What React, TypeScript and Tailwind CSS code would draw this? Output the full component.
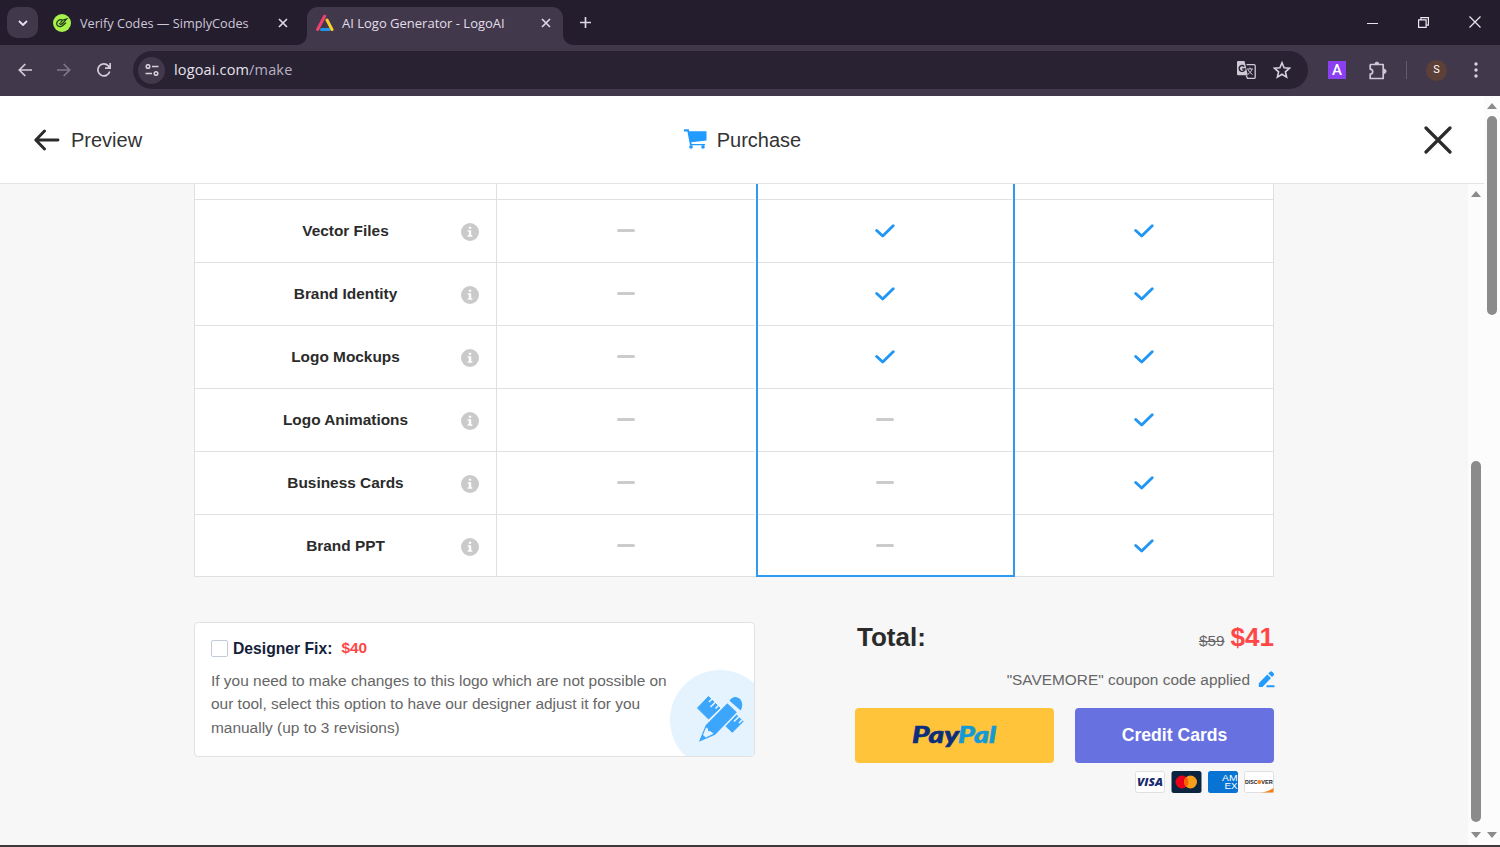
import React from "react";

const ui = "font-['Open_Sans',sans-serif]";

const features = [
  { name: "Vector Files", plans: [false, true, true] },
  { name: "Brand Identity", plans: [false, true, true] },
  { name: "Logo Mockups", plans: [false, true, true] },
  { name: "Logo Animations", plans: [false, false, true] },
  { name: "Business Cards", plans: [false, false, true] },
  { name: "Brand PPT", plans: [false, false, true] },
];

const TabClose: React.FC = () => (
  <svg width="10" height="10" viewBox="0 0 10 10" stroke="#ddd6e4" strokeWidth="1.7" fill="none">
    <path d="M1 1l8 8M9 1L1 9" />
  </svg>
);

const TabStrip: React.FC = () => (
  <div className="flex h-[45px] shrink-0 items-end bg-[#241d2e]">
    <div className="flex h-[45px] w-[307px] items-center pl-[7px]">
      <div className="flex h-[31px] w-[31px] items-center justify-center rounded-[10px] bg-[#41394b]">
        <svg width="10" height="6" viewBox="0 0 10 6" fill="none" stroke="#e8e2ee" strokeWidth="1.8">
          <path d="M1 1l4 4 4-4" />
        </svg>
      </div>
      <svg className="ml-[15px]" width="18" height="18" viewBox="0 0 18 18" fill="none">
        <circle cx="9" cy="9" r="9" fill="#a8f04b" />
        <path d="M9.500 6C6.500 5 3.500 7 3.700 10c.2 2.700 3.800 3.300 6 1.500l3.300-2.700M6.300 9.300c.7 1.500 2.700 1.200 3.900-.4L13.500 5l-4 1.200-2 2.600" stroke="#1d3a16" strokeWidth="1.3" />
      </svg>
      <span className={`${ui} ml-[9px] mt-[2px] w-[198px] whitespace-nowrap text-[12.7px] text-[#cfc8d6]`}>
        Verify Codes — SimplyCodes
      </span>
      <TabClose />
    </div>
    <div className="relative flex h-[38px] w-[256px] items-center rounded-t-[11px] bg-[#41394b] pl-[9px] pb-[6px]">
      <svg className="absolute -left-[10px] bottom-0" width="10" height="10" viewBox="0 0 10 10">
        <path d="M10 0v10H0A10 10 0 0 0 10 0z" fill="#41394b" />
      </svg>
      <svg className="absolute -right-[10px] bottom-0" width="10" height="10" viewBox="0 0 10 10">
        <path d="M0 0v10h10A10 10 0 0 1 0 0z" fill="#41394b" />
      </svg>
      <svg width="18" height="18" viewBox="0 0 18 18" fill="none" strokeLinecap="round" strokeWidth="3">
        <path d="M5.500 15.500h7.500" stroke="#2196e8" />
        <path d="M11 6l5 9.500" stroke="#f8cf2c" />
        <path d="M1.600 15.500L8.600 2.200" stroke="#f1416c" />
      </svg>
      <span className={`${ui} ml-[8px] mt-px w-[199px] whitespace-nowrap text-[13px] text-[#e3dde9]`}>
        AI Logo Generator - LogoAI
      </span>
      <TabClose />
    </div>
    <svg className="mb-[17px] ml-[17px]" width="11" height="11" viewBox="0 0 11 11" stroke="#ddd6e4" strokeWidth="1.7">
      <path d="M5.500 0v11M0 5.500h11" />
    </svg>
    <div className="mb-[17px] ml-auto flex items-center gap-[40px] pr-[19px]">
      <svg width="11" height="11" viewBox="0 0 11 11" stroke="#e8e2ee">
        <path d="M0 6.500h11" />
      </svg>
      <svg width="11" height="11" viewBox="0 0 11 11" fill="none" stroke="#ece7f1" strokeWidth="1.2">
        <path d="M.6 2.900h7.500v7.500H.6zM2.900 2.600V.6h7.500v7.500H8.400" />
      </svg>
      <svg width="12" height="12" viewBox="0 0 12 12" stroke="#ece7f1" strokeWidth="1.2">
        <path d="M.5.5l11 11M11.500.5l-11 11" />
      </svg>
    </div>
  </div>
);

const Toolbar: React.FC = () => (
  <div className="flex h-[51px] shrink-0 items-center bg-[#41394b] pb-px">
    <svg className="ml-[18px]" width="14" height="14" viewBox="0 0 14 14" fill="none" stroke="#d3ccd9" strokeWidth="1.7">
      <path d="M14 7H1.500M7.300 1L1.300 7l6 6" />
    </svg>
    <svg className="ml-[25px]" width="14" height="14" viewBox="0 0 14 14" fill="none" stroke="#80778a" strokeWidth="1.7">
      <path d="M0 7h12.500M6.700 1l6 6-6 6" />
    </svg>
    <svg className="ml-[26px]" width="14" height="14" viewBox="0 0 14 14" fill="none" stroke="#d3ccd9" strokeWidth="1.7">
      <path d="M12.700 8.500A6 6 0 1 1 11.300 2.800L13 4.700M13.200 0v5.200H8" />
    </svg>
    <div className="ml-[22px] flex h-[38px] w-[1175px] items-center rounded-full bg-[#282233] pl-[5px] pr-[17px]">
      <div className="flex h-[27px] w-[27px] items-center justify-center rounded-full bg-[#41394b]">
        <svg width="14" height="12" viewBox="0 0 14 12" fill="none" stroke="#d8d1de" strokeWidth="1.5">
          <circle cx="3" cy="2.500" r="1.800" />
          <circle cx="11" cy="9.500" r="1.800" />
          <path d="M7 2.500h6.500M.5 9.500H7" />
        </svg>
      </div>
      <span className={`${ui} ml-[9px] text-[14.5px] tracking-[0.15px] text-[#e7e2eb]`}>
        logoai.com<span className="text-[#b8b0c0]">/make</span>
      </span>
      <svg className="ml-auto" width="19" height="18" viewBox="0 0 19 18" fill="none">
        <path d="M9.500 3.700H17a1.200 1.200 0 0 1 1.200 1.200v11.300a1.200 1.200 0 0 1-1.200 1.200h-6.500l-1.200-3" stroke="#cfc8d5" strokeWidth="1.3" />
        <path d="M10 8h6M13 6.500V8M15 8c-.7 2.400-2 4-4 5.300M11 8.500c.9 2 2.400 3.700 4.500 5" stroke="#cfc8d5" />
        <path d="M1 0h6.500l3.300 14.300H1.500A1.300 1.300 0 0 1 0 13V1a1 1 0 0 1 1-1z" fill="#cfc8d5" />
        <path d="M7.200 5.500A2.900 2.900 0 1 0 7.900 8H5.200" stroke="#282233" strokeWidth="1.4" />
      </svg>
      <svg className="ml-[17px]" width="18" height="18" viewBox="0 0 18 18" fill="none" stroke="#d8d1de" strokeWidth="1.6">
        <path d="M9 1.700l2.100 5 5.400.5-4.100 3.600 1.200 5.300L9 13.300l-4.600 2.800 1.200-5.300L1.500 7.200l5.400-.5z" />
      </svg>
    </div>
    <div className="ml-[20px] flex h-[18px] w-[18px] items-center justify-center bg-[#8b3ff0] pt-px font-['Roboto',sans-serif] text-[15px] font-medium leading-none text-white">
      A
    </div>
    <svg className="ml-[22px]" width="20" height="19" viewBox="0 0 20 19" fill="none">
      <path d="M2.500 3.500h12.700v14H2.200v-4.300c3.300-.3 3.300-4.700 0-5V4.300z" stroke="#cfc8d5" strokeWidth="1.7" strokeLinejoin="round" />
      <path d="M7 3a1.900 1.900 0 0 1 3.800 0zM16 8.200a2.100 2.100 0 0 1 0 4.200z" fill="#cfc8d5" stroke="#cfc8d5" />
    </svg>
    <div className="ml-[18px] h-[18px] w-px bg-[#655b70]" />
    <div className="ml-[19px] flex h-[21px] w-[21px] items-center justify-center rounded-full bg-[#5d4037] font-['Roboto',sans-serif] text-[11px] text-white">
      S
    </div>
    <svg className="ml-[27px]" width="4" height="16" viewBox="0 0 4 16" fill="#d8d1de">
      <circle cx="2" cy="2" r="1.700" />
      <circle cx="2" cy="8" r="1.700" />
      <circle cx="2" cy="14" r="1.700" />
    </svg>
  </div>
);

const Header: React.FC = () => (
  <header className="grid h-[88px] shrink-0 grid-cols-3 items-center border-b border-[#e4e4e4] bg-white text-[20px] text-[#333]">
    <div className="flex items-center pl-[34px]">
      <svg width="26" height="22" viewBox="0 0 26 22" fill="none" stroke="#2b2b2b" strokeWidth="2.9" strokeLinecap="round" strokeLinejoin="round">
        <path d="M24 11H2M10.500 2L1.800 11l8.700 9" />
      </svg>
      <span className="ml-[11px]">Preview</span>
    </div>
    <div className="flex items-center justify-center pl-px">
      <svg className="-mt-[2px]" width="23" height="20" viewBox="0 0 23 20" fill="#229bff">
        <path d="M0 .2h4.800l.5 2H22.500v9.300L7.300 13.200l.4 1.700H21v1.300H6L3.400 2.500H0z" />
        <circle cx="7" cy="17.900" r="1.800" />
        <circle cx="19" cy="17.900" r="1.800" />
      </svg>
      <span className="ml-[10px]">Purchase</span>
    </div>
    <svg className="mr-[32px] justify-self-end" width="28" height="28" viewBox="0 0 28 28" fill="none" stroke="#2b2b2b" strokeWidth="3.2" strokeLinecap="round">
      <path d="M2 2l24 24M26 2L2 26" />
    </svg>
  </header>
);

const Mark: React.FC<{ on: boolean }> = ({ on }) =>
  on ? (
    <svg className="mt-px" width="20" height="14" viewBox="0 0 20 14" fill="none" stroke="#2196f3" strokeWidth="2.9" strokeLinecap="round" strokeLinejoin="round">
      <path d="M1.700 6.500l6 5.500L18.200 1.800" />
    </svg>
  ) : (
    <span className="h-[3px] w-[18px] rounded-full bg-[#cbcbcb]" />
  );

const InfoIcon: React.FC = () => (
  <svg width="18" height="18" viewBox="0 0 18 18">
    <circle cx="9" cy="9" r="9" fill="#cacaca" />
    <path d="M7.800 3.700h2.400v2.100H7.800zM6.700 7.200h3.500v5h1.100v1.500H6.700v-1.500h1.100V8.700H6.700z" fill="#fff" />
  </svg>
);

const planStyles = [
  "w-[258.5px] border-b border-[#e0e0e0] pr-px",
  "w-[259px] border-2 border-t-0 border-[#2f9bf0] pr-px",
  "w-[259.5px] border-b border-r border-[#e0e0e0]",
];

const CompareTable: React.FC = () => (
  <div className="ml-[194px] flex h-[393px] w-[1080px] bg-white">
    <div className="w-[303px] overflow-hidden border-x border-b border-[#e0e0e0]">
      <div className="h-[15px]" />
      {features.map((f) => (
        <div key={f.name} className="grid h-[63px] grid-cols-[1fr_auto_1fr] items-center border-t border-[#e0e0e0]">
          <span className="col-start-2 text-[15.4px] font-bold text-[#2b2b2b]">{f.name}</span>
          <span className="mr-[17px] mt-[2px] justify-self-end">
            <InfoIcon />
          </span>
        </div>
      ))}
    </div>
    {planStyles.map((style, i) => (
      <div key={i} className={`${style} overflow-hidden`}>
        <div className="h-[15px]" />
        {features.map((f) => (
          <div key={f.name} className="flex h-[63px] items-center justify-center border-t border-[#e0e0e0] pb-px">
            <Mark on={f.plans[i]} />
          </div>
        ))}
      </div>
    ))}
  </div>
);

const DesignerFix: React.FC = () => (
  <div className="relative h-[135px] w-[561px] overflow-hidden rounded-[4px] border border-[#e2e2e2] bg-white px-[16px] pt-[15px]">
    <div className="flex h-[20px] items-center">
      <span className="mt-px h-[17px] w-[17px] rounded-[2px] border border-[#c3cad8] bg-white" />
      <span className="ml-[5px] mt-px text-[15.7px] font-bold text-[#14213a]">Designer Fix:</span>
      <span className="ml-[9px] text-[15.4px] font-bold text-[#ff4747]">$40</span>
    </div>
    <p className="mt-[11px] whitespace-nowrap text-[15.45px] leading-[23.3px] text-[#666]">
      If you need to make changes to this logo which are not possible on
      <br />
      our tool, select this option to have our designer adjust it for you
      <br />
      manually (up to 3 revisions)
    </p>
    <svg className="absolute bottom-0 right-0" width="84" height="87" viewBox="0 0 84 87">
      <circle cx="50" cy="51" r="50" fill="#e5f3ff" />
      <g fill="#3ba6fb" stroke="#3ba6fb" strokeLinejoin="round">
        <path d="M27.500 39L38.500 27.500 50 39 38.500 50z" />
        <path d="M51 52.500L62 41.500 73 52.500 62.300 63.300z" />
      </g>
      <path d="M42 30l-3 3M45.500 33l-5 5M48.500 36.500l-3 3M65.500 44l-3 3M69 47.500l-5 5M72 51l-3 3" stroke="#e5f3ff" strokeWidth="1.6" />
      <path d="M57.300 33.200l10.500 10-22.300 23.300-18 7.700 7.600-18.500z" fill="#3ba6fb" stroke="#e5f3ff" strokeWidth="1.5" />
      <path d="M36 58.500c2 .5 2.500 2 2 3.700 1.700-.5 3.300 0 5.500 2.600l-7.800 3.700-2.700-2.500z" fill="#e5f3ff" />
      <path d="M59.500 31.700c3-5 8-4.500 11-1.200 2.300 3 2.300 7 .2 11z" fill="#3ba6fb" />
    </svg>
  </div>
);

const CardBadges: React.FC = () => (
  <div className="mt-[8px] flex justify-end gap-[6px] pr-px">
    <svg width="30" height="22" viewBox="0 0 30 22">
      <rect x=".5" y=".5" width="29" height="21" rx="2" fill="#fff" stroke="#e0e0e0" />
      <text x="2" y="15" textLength="26" lengthAdjust="spacingAndGlyphs" fontFamily="Open Sans, sans-serif" fontStyle="italic" fontWeight="800" fontSize="11" fill="#1a2b6d">VISA</text>
    </svg>
    <svg width="31" height="22" viewBox="0 0 31 22">
      <rect x=".5" width="30" height="22" rx="2.500" fill="#0b2440" />
      <circle cx="11" cy="11" r="6.500" fill="#eb001b" />
      <circle cx="19.500" cy="11" r="6.500" fill="#f79e1b" />
      <path d="M15.250 6.100a6.500 6.500 0 0 1 0 9.800 6.500 6.500 0 0 1 0-9.800z" fill="#ff5f00" />
    </svg>
    <svg width="30" height="22" viewBox="0 0 30 22">
      <rect width="30" height="22" rx="2.500" fill="#0873d2" />
      <g fontFamily="Liberation Sans, sans-serif" fontSize="9" fill="#fff">
        <text x="14" y="10" textLength="15.500" lengthAdjust="spacingAndGlyphs">AM</text>
        <text x="16.500" y="18" textLength="13" lengthAdjust="spacingAndGlyphs">EX</text>
      </g>
    </svg>
    <svg width="30" height="22" viewBox="0 0 30 22">
      <rect x=".5" y=".5" width="29" height="21" rx="2" fill="#fff" stroke="#e0e0e0" />
      <path d="M17 21.500c5-.8 9-2.300 12.500-4.500v4.500z" fill="#f5821f" />
      <g fontFamily="Liberation Sans, sans-serif" fontWeight="700" fontSize="6" fill="#222">
        <text x="1" y="13" textLength="12.500" lengthAdjust="spacingAndGlyphs">DISC</text>
        <text x="17.300" y="13" textLength="11.500" lengthAdjust="spacingAndGlyphs">VER</text>
      </g>
      <circle cx="15.300" cy="11" r="2" fill="#f5821f" />
    </svg>
  </div>
);

const Checkout: React.FC = () => (
  <div className="w-[420px]">
    <div className="flex h-[30px] items-center justify-between pl-[2px] pr-px">
      <span className="text-[26px] font-bold text-[#2b2b2b]">Total:</span>
      <span className="flex items-baseline">
        <span className="text-[15.4px] text-[#666] line-through">$59</span>
        <span className="ml-[6px] text-[26px] font-bold text-[#ff4747]">$41</span>
      </span>
    </div>
    <div className="mt-[16px] flex h-[23px] items-center justify-end">
      <span className="text-[15.4px] text-[#666]">"SAVEMORE" coupon code applied</span>
      <svg className="ml-[8px]" width="17" height="17" viewBox="0 0 17 17" fill="#229bff">
        <path d="M.8 12.200L9.300 3.400l3.700 3.700-8.500 8.800H.8zM10.300 2.400L12 .8c.7-.7 1.500-.7 2.200 0l1.400 1.400c.7.7.7 1.500 0 2.200L14 6.100zM8.500 14.200H16.500v2H8.500z" />
      </svg>
    </div>
    <div className="mt-[17px] flex justify-between pr-px">
      <button className="flex h-[55px] w-[199px] items-center justify-center rounded-[4px] bg-[#ffc439]">
        <svg width="86" height="32" viewBox="0 0 86 32" fontFamily="Lato, sans-serif" fontStyle="italic" fontWeight="900" fontSize="23.500" strokeWidth=".6">
          <text x="0" y="23" textLength="47" lengthAdjust="spacingAndGlyphs" fill="#0b2f7c" stroke="#0b2f7c">Pay</text>
          <text x="46" y="23" textLength="38" lengthAdjust="spacingAndGlyphs" fill="#139ad6" stroke="#139ad6">Pal</text>
        </svg>
      </button>
      <button className="h-[55px] w-[199px] rounded-[4px] bg-[#6772e0] text-[17.6px] font-bold text-white">Credit Cards</button>
    </div>
    <CardBadges />
  </div>
);

const Arrow: React.FC<{ down?: boolean }> = ({ down }) => (
  <svg width="10" height="6" viewBox="0 0 10 6" fill="#8b8b8b" className="shrink-0">
    <path d={down ? "M0 0h10L5 6z" : "M0 6h10L5 0z"} />
  </svg>
);

const App: React.FC = () => {
  return (
    <div className="flex h-[847px] w-[1500px] flex-col overflow-hidden bg-white font-['Liberation_Sans',sans-serif]">
      <TabStrip />
      <Toolbar />
      <div className="flex h-[749px] shrink-0">
        <div className="w-[1484px]">
          <Header />
          <div className="flex h-[661px]">
            <main className="w-[1468px] bg-[#f7f7f7]">
              <CompareTable />
              <div className="ml-[194px] mt-[45px] flex w-[1081px] justify-between">
                <DesignerFix />
                <Checkout />
              </div>
            </main>
            <div className="flex w-[16px] flex-col items-center bg-[#fcfcfc] pt-[7px]">
              <Arrow />
              <div className="mt-[264px] h-[361px] w-[10px] rounded-full bg-[#8b8b8b]" />
              <div className="mt-[10px]">
                <Arrow down />
              </div>
            </div>
          </div>
        </div>
        <div className="flex w-[16px] flex-col items-center bg-[#fcfcfc] pb-[7px] pt-[7px]">
          <Arrow />
          <div className="mt-[7px] h-[199px] w-[10px] rounded-full bg-[#8b8b8b]" />
          <div className="mt-auto">
            <Arrow down />
          </div>
        </div>
      </div>
      <div className="h-[2px] shrink-0 bg-[#3d393c]" />
    </div>
  );
};

export default App;
